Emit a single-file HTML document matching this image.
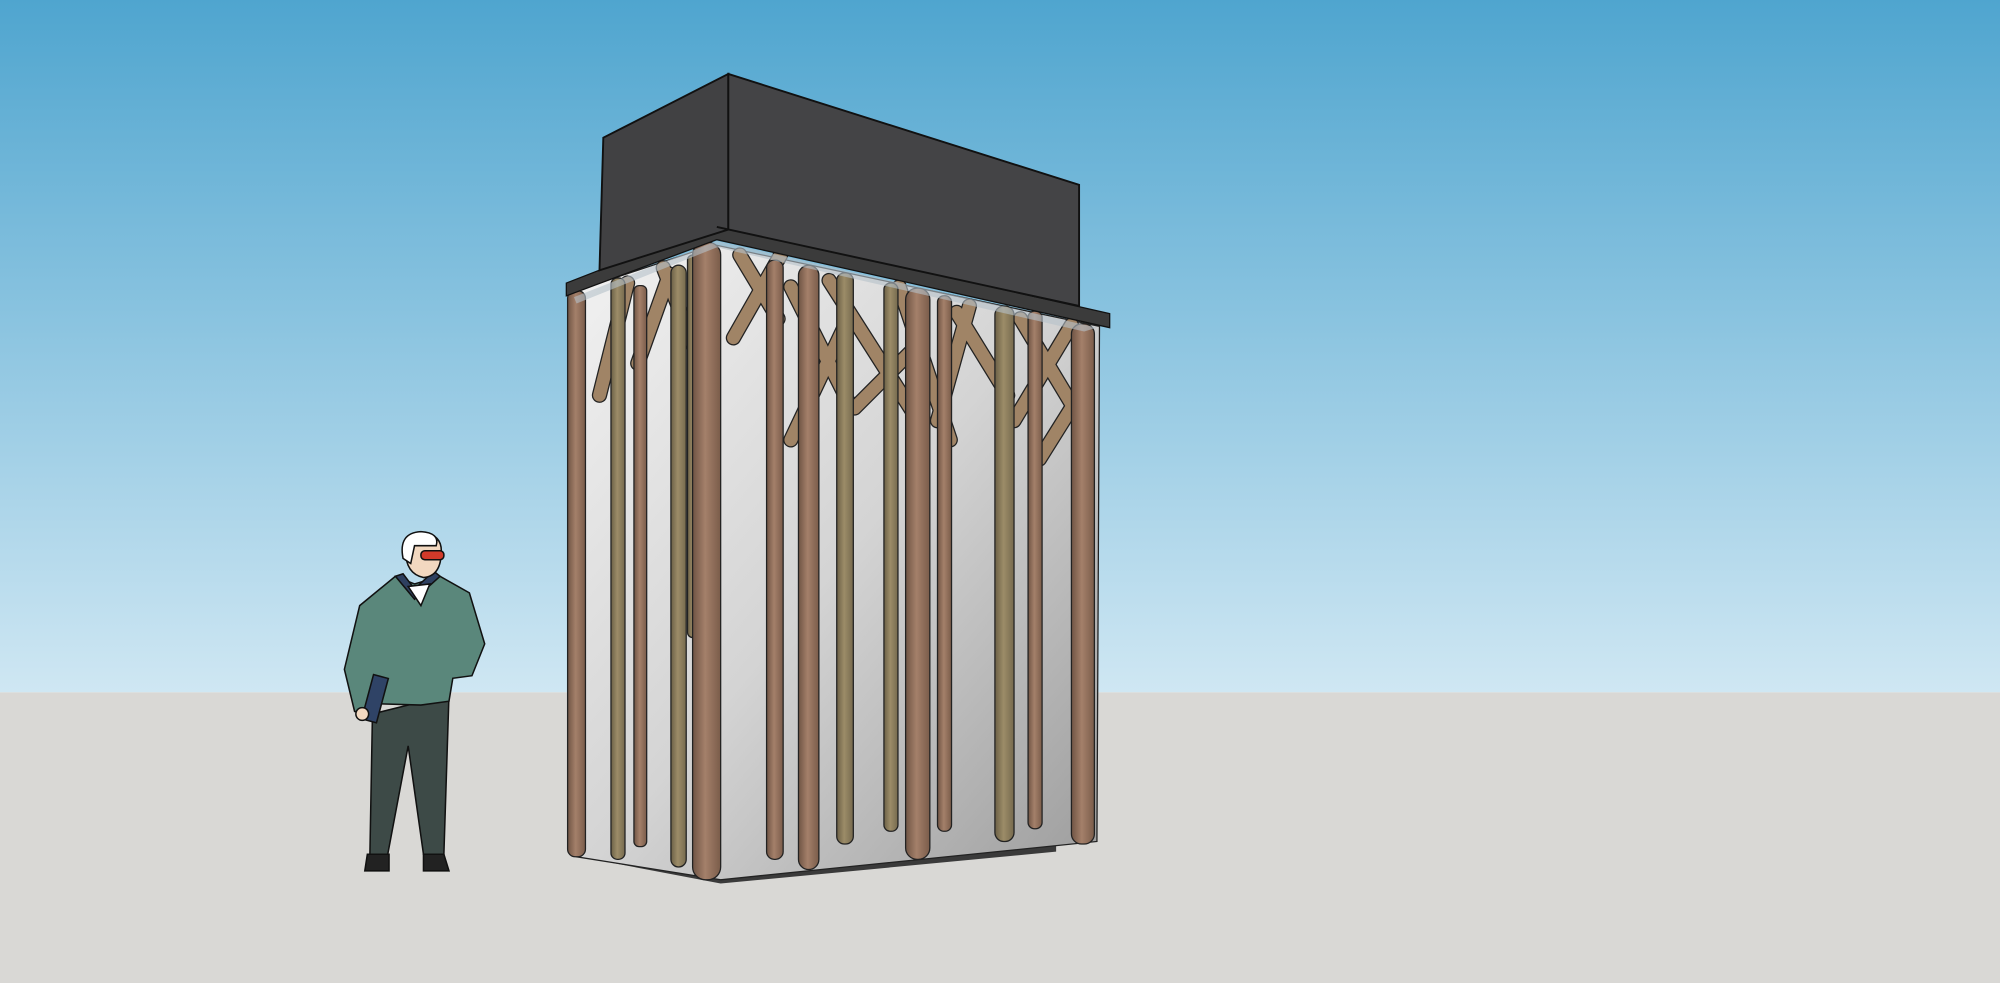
<!DOCTYPE html>
<html><head><style>html,body{margin:0;padding:0;overflow:hidden}svg{display:block}</style></head><body>
<svg width="2000" height="983" viewBox="0 0 1568 771" preserveAspectRatio="none" xmlns="http://www.w3.org/2000/svg">
<defs>
<linearGradient id="sky" x1="0" y1="0" x2="0" y2="1"><stop offset="0" stop-color="#4fa5cf"/><stop offset="1" stop-color="#cfe7f3"/></linearGradient>
<linearGradient id="wall" x1="0" y1="0" x2="1" y2="1"><stop offset="0" stop-color="#f2f2f2"/><stop offset="0.5" stop-color="#d4d4d4"/><stop offset="1" stop-color="#9c9c9c"/></linearGradient>
<linearGradient id="cb" x1="0" y1="0" x2="1" y2="0"><stop offset="0" stop-color="#6f5444"/><stop offset="0.45" stop-color="#a4806a"/><stop offset="1" stop-color="#7a5c4a"/></linearGradient>
<linearGradient id="co" x1="0" y1="0" x2="1" y2="0"><stop offset="0" stop-color="#6b6046"/><stop offset="0.45" stop-color="#9c8c68"/><stop offset="1" stop-color="#766a4e"/></linearGradient>
</defs>
<rect width="1568" height="543" fill="url(#sky)"/>
<rect y="543" width="1568" height="228" fill="#d9d8d5"/>
<polygon points="476,676 565,693 828,668 828,660 476,668" fill="#3a3a3a"/>
<polygon points="452,228 560,192 862,256 860,660 565,690 452,672" fill="url(#wall)" stroke="#222" stroke-width="1"/>
<g stroke-linecap="round" fill="none">
<g stroke="#222" stroke-width="12">
<path d="M470,310 L492,222"/><path d="M500,285 L525,215"/><path d="M520,210 L555,300"/><path d="M580,200 L610,250"/><path d="M575,265 L612,200"/><path d="M620,225 L665,315"/><path d="M620,345 L665,250"/><path d="M650,220 L720,330"/><path d="M670,320 L720,270"/><path d="M705,225 L745,345"/><path d="M735,330 L760,240"/><path d="M750,245 L790,310"/><path d="M795,330 L840,255"/><path d="M800,250 L845,325"/><path d="M815,360 L840,320"/>
</g>
<g stroke="#a08466" stroke-width="10">
<path d="M470,310 L492,222"/><path d="M500,285 L525,215"/><path d="M520,210 L555,300"/><path d="M580,200 L610,250"/><path d="M575,265 L612,200"/><path d="M620,225 L665,315"/><path d="M620,345 L665,250"/><path d="M650,220 L720,330"/><path d="M670,320 L720,270"/><path d="M705,225 L745,345"/><path d="M735,330 L760,240"/><path d="M750,245 L790,310"/><path d="M795,330 L840,255"/><path d="M800,250 L845,325"/><path d="M815,360 L840,320"/>
</g>
</g>
<g stroke="#222" stroke-width="1">
<rect x="445" y="228" width="14" height="444" rx="6" fill="url(#cb)"/>
<rect x="479" y="218" width="11" height="456" rx="5" fill="url(#co)"/>
<rect x="497" y="224" width="10" height="440" rx="4" fill="url(#cb)"/>
<rect x="526" y="208" width="12" height="472" rx="6" fill="url(#co)"/>
<rect x="539" y="200" width="9" height="300" rx="4" fill="url(#co)"/>
<rect x="543" y="190" width="22" height="500" rx="10" fill="url(#cb)"/>
<rect x="601" y="204" width="13" height="470" rx="6" fill="url(#cb)"/>
<rect x="626" y="208" width="16" height="474" rx="8" fill="url(#cb)"/>
<rect x="656" y="214" width="13" height="448" rx="6" fill="url(#co)"/>
<rect x="693" y="222" width="11" height="430" rx="5" fill="url(#co)"/>
<rect x="710" y="226" width="19" height="448" rx="9" fill="url(#cb)"/>
<rect x="735" y="232" width="11" height="420" rx="5" fill="url(#cb)"/>
<rect x="780" y="240" width="15" height="420" rx="7" fill="url(#co)"/>
<rect x="806" y="244" width="11" height="406" rx="5" fill="url(#cb)"/>
<rect x="840" y="254" width="18" height="408" rx="8" fill="url(#cb)"/>
</g>
<polygon points="444,222 562,176 870,246 870,257 562,188 444,232" fill="#3b3b3b" stroke="#111" stroke-width="1"/>
<polygon points="450,233 562,189 860,257 850,260 562,194 452,238" fill="#b5c2ca" opacity="0.6"/>
<polygon points="473,108 571,58 571,180 470,212" fill="#414143" stroke="#111" stroke-width="1.5"/>
<polygon points="571,58 846,145 846,240 562,178 571,180" fill="#444446" stroke="#111" stroke-width="1.5"/>
<g stroke="#111" stroke-width="1.2">
<path d="M292,560 L290,670 L304,670 L320,585 L332,670 L348,670 L352,545 Z" fill="#3d4a47"/>
<path d="M288,670 L286,683 L305,683 L305,670 Z" fill="#222"/>
<path d="M332,670 L332,683 L352,683 L348,670 Z" fill="#222"/>
<path d="M310,452 L325,458 L345,452 L368,465 L380,505 L370,530 L355,532 L352,550 L330,553 L295,552 L290,560 L278,558 L270,525 L282,475 Z" fill="#5a877b"/>
<path d="M310,452 L325,470 L345,452 L340,448 L325,462 L316,450 Z" fill="#2e4060"/>
<path d="M320,460 L330,475 L337,458 Z" fill="#fff"/>
<rect x="288" y="530" width="12" height="36" fill="#2f4366" transform="rotate(15 294 548)"/>
<circle cx="284" cy="560" r="5" fill="#f2d8c0"/>
<path d="M318,432 Q318,415 333,418 Q346,420 346,432 Q346,452 332,453 Q318,450 318,432 Z" fill="#f2d8c0"/>
<path d="M316,438 Q312,418 330,417 Q345,418 342,428 L325,428 L322,442 Z" fill="#fff"/>
<rect x="330" y="432" width="18" height="7" rx="3" fill="#d23a2a"/>
</g>
</svg>
</body></html>
